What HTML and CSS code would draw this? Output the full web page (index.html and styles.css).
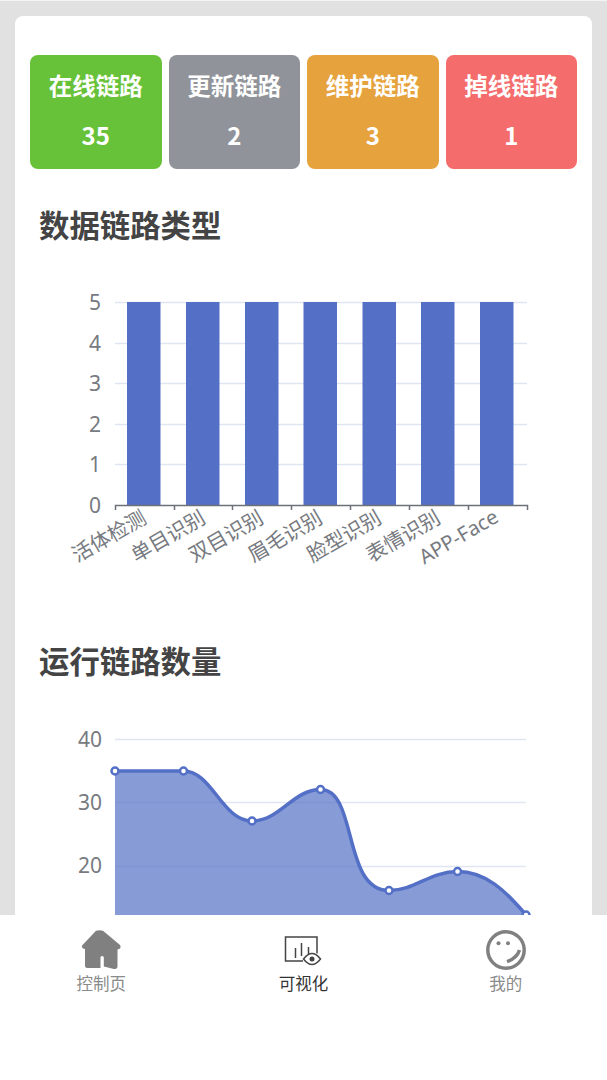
FILE: index.html
```html
<!DOCTYPE html>
<html lang="zh-CN">
<head>
    <meta charset="UTF-8">
    <meta name="viewport" content="width=device-width, initial-scale=1.0">
    <title>可视化</title>
    <link rel="stylesheet" href="styles.css">
</head>
<body>

<div class="page">
    <main class="content">
        <div class="card">
            <div class="stats">
                <div class="stat stat-green"><span class="stat-name">在线链路</span><span class="stat-value">35</span></div>
                <div class="stat stat-gray"><span class="stat-name">更新链路</span><span class="stat-value">2</span></div>
                <div class="stat stat-orange"><span class="stat-name">维护链路</span><span class="stat-value">3</span></div>
                <div class="stat stat-red"><span class="stat-name">掉线链路</span><span class="stat-value">1</span></div>
            </div>

            <h2 class="chart-title title-first">数据链路类型</h2>
            <svg class="chart chart-bar" width="547" height="330" viewBox="30 250 547 330">
                <g class="grid">
                    <line x1="115" x2="527" y1="302.5" y2="302.5"/>
                    <line x1="115" x2="527" y1="343.5" y2="343.5"/>
                    <line x1="115" x2="527" y1="383.5" y2="383.5"/>
                    <line x1="115" x2="527" y1="424.5" y2="424.5"/>
                    <line x1="115" x2="527" y1="464.5" y2="464.5"/>
                </g>
                <g class="bars">
                    <rect x="127" y="302" width="33.5" height="203"/>
                    <rect x="186" y="302" width="33.5" height="203"/>
                    <rect x="245" y="302" width="33.5" height="203"/>
                    <rect x="303.5" y="302" width="33.5" height="203"/>
                    <rect x="362.5" y="302" width="33.5" height="203"/>
                    <rect x="421" y="302" width="33.5" height="203"/>
                    <rect x="480" y="302" width="33.5" height="203"/>
                </g>
                <path class="axis" d="M115.5 510V505.5H527.5V510M174.5 505.5V510M232.5 505.5V510M291.5 505.5V510M350.5 505.5V510M409.5 505.5V510M468.5 505.5V510"/>
                <g class="y-labels">
                    <text x="101" y="310">5</text>
                    <text x="101" y="351">4</text>
                    <text x="101" y="391">3</text>
                    <text x="101" y="432">2</text>
                    <text x="101" y="472">1</text>
                    <text x="101" y="513">0</text>
                </g>
                <g class="x-labels">
                    <text transform="translate(148 522) rotate(-30)">活体检测</text>
                    <text transform="translate(207 522) rotate(-30)">单目识别</text>
                    <text transform="translate(265 522) rotate(-30)">双目识别</text>
                    <text transform="translate(324 522) rotate(-30)">眉毛识别</text>
                    <text transform="translate(383 522) rotate(-30)">脸型识别</text>
                    <text transform="translate(442 522) rotate(-30)">表情识别</text>
                    <text transform="translate(500 521) rotate(-30)">APP-Face</text>
                </g>
            </svg>

            <h2 class="chart-title title-second">运行链路数量</h2>
            <svg class="chart chart-line" width="547" height="240" viewBox="30 700 547 240">
                <g class="grid">
                    <line x1="115" x2="526" y1="739.5" y2="739.5"/>
                    <line x1="115" x2="526" y1="802.5" y2="802.5"/>
                    <line x1="115" x2="526" y1="866.5" y2="866.5"/>
                </g>
                <path class="area" d="M115 771H183.5C212 771 222 821 252 821C280 821 293 789.5 320.5 789.5C358 789.5 342 890.5 389 890.5C415 890.5 430 871.5 457.5 871.5C485 871.5 505 890 526 915V940H115Z"/>
                <path class="line" d="M115 771H183.5C212 771 222 821 252 821C280 821 293 789.5 320.5 789.5C358 789.5 342 890.5 389 890.5C415 890.5 430 871.5 457.5 871.5C485 871.5 505 890 526 915"/>
                <g class="points">
                    <circle cx="115" cy="771" r="3.5"/>
                    <circle cx="183.5" cy="771" r="3.5"/>
                    <circle cx="252" cy="821" r="3.5"/>
                    <circle cx="320.5" cy="789.5" r="3.5"/>
                    <circle cx="389" cy="890.5" r="3.5"/>
                    <circle cx="457.5" cy="871.5" r="3.5"/>
                    <circle cx="526" cy="915" r="3.5"/>
                </g>
                <g class="y-labels">
                    <text x="102" y="747">40</text>
                    <text x="102" y="810">30</text>
                    <text x="102" y="873">20</text>
                </g>
            </svg>
        </div>
    </main>

    <nav class="tabbar">
        <a class="tab" href="#">
            <svg class="tab-icon" width="40" height="40" viewBox="0 0 40 40">
                <path class="icon-home" d="M15 .8Q18.500 -.5 22 .8L39 15Q40.500 18 38 19L36.500 19.500V37Q36 39.500 33 39L22.800 36.500V27Q21 25 19.500 27V38H6.500Q4 38 4 35.500V19L2 18.500Q0 17 1.500 15Z"/>
            </svg>
            <span class="tab-label">控制页</span>
        </a>
        <a class="tab tab-active" href="#">
            <svg class="tab-icon" width="40" height="40" viewBox="0 0 40 40">
                <path class="icon-line" d="M20 31H2.500V7H34V23.500"/>
                <path class="icon-line" d="M12.500 18V28M18.500 13V26M25.500 17V24"/>
                <path class="icon-line" d="M20.500 29Q29 18 37.500 29Q29 40 20.500 29Z"/>
                <circle class="icon-pupil" cx="29" cy="29" r="2.500"/>
            </svg>
            <span class="tab-label">可视化</span>
        </a>
        <a class="tab" href="#">
            <svg class="tab-icon" width="40" height="40" viewBox="0 0 40 40">
                <circle class="icon-face" cx="20" cy="20" r="18.200"/>
                <circle class="icon-eye" cx="12.500" cy="13.300" r="2"/>
                <circle class="icon-eye" cx="22" cy="13.300" r="2"/>
                <path class="icon-smile" d="M21 31.700Q31 28 33.500 20"/>
            </svg>
            <span class="tab-label">我的</span>
        </a>
    </nav>
</div>

</body>
</html>
```

FILE: styles.css
```css
* {
    box-sizing: border-box;
}

body {
    margin: 0;
    font-family: "Noto Sans", "Noto Sans CJK SC", sans-serif;
    background-color: #fff;
}

.page {
    display: flex;
    flex-direction: column;
    height: 1080px;
    overflow: hidden;
}

.content {
    flex: 1;
    min-height: 0;
    overflow: hidden;
    padding: 15px 15px 0;
    border-top: 1px solid #f4f4f4;
    background-color: #e1e1e1;
}

.card {
    height: 1000px;
    padding: 39px 15px 0;
    background-color: #fff;
    border-radius: 8px;
}

.stats {
    display: grid;
    grid-template-columns: repeat(4, 131.5px);
    gap: 7px;
}

.stat {
    display: flex;
    flex-direction: column;
    align-items: center;
    height: 114px;
    padding-top: 12px;
    border-radius: 8px;
    color: #fff;
    font-family: "Noto Sans CJK SC", sans-serif;
    font-weight: 700;
}

.stat-name {
    font-size: 23.5px;
    line-height: 36px;
}

.stat-value {
    margin-top: 14px;
    font-size: 24px;
    line-height: 36px;
}

.stat-green { background-color: #67c23a; }
.stat-gray { background-color: #909399; }
.stat-orange { background-color: #e6a23c; }
.stat-red { background-color: #f56c6c; }

.chart-title {
    margin: 0;
    padding-left: 9px;
    color: #444;
    font-family: "Noto Sans CJK SC", sans-serif;
    font-size: 30.4px;
    font-weight: 700;
    line-height: 44px;
}

.title-first {
    margin-top: 33px;
}

.title-second {
    margin-top: 58px;
}

.chart {
    display: block;
}

.chart-bar {
    margin-top: 4px;
}

.chart-line {
    margin-top: 18px;
}

.grid line {
    stroke: #e0e6f1;
    stroke-width: 1.5;
}

.bars rect {
    fill: #5470c6;
}

.axis {
    fill: none;
    stroke: #6e7079;
    stroke-width: 1.5;
}

.y-labels text {
    fill: #777a80;
    font-size: 21px;
    text-anchor: end;
}

.x-labels text {
    fill: #777a80;
    font-size: 20.4px;
    text-anchor: end;
}

.area {
    fill: #5470c6;
    opacity: 0.7;
}

.line {
    fill: none;
    stroke: #5470c6;
    stroke-width: 3.5;
}

.points circle {
    fill: #fff;
    stroke: #5470c6;
    stroke-width: 2.5;
}

.tabbar {
    display: grid;
    grid-template-columns: repeat(3, 1fr);
    flex: none;
    height: 165px;
    padding-top: 15px;
    background-color: #fff;
}

.tab {
    display: flex;
    flex-direction: column;
    align-items: center;
    color: #8a8a8a;
    text-decoration: none;
}

.tab-active {
    color: #333;
}

.tab-icon {
    display: block;
}

.tab-label {
    font-size: 16.5px;
    line-height: 24px;
    margin-top: 1px;
    font-family: "Noto Sans CJK SC", sans-serif;
}

.icon-home {
    fill: #808080;
}

.icon-line {
    fill: none;
    stroke: #444;
    stroke-width: 1.5;
}

.icon-pupil {
    fill: #444;
}

.icon-face {
    fill: none;
    stroke: #808080;
    stroke-width: 3.5;
}

.icon-eye {
    fill: #808080;
}

.icon-smile {
    fill: none;
    stroke: #808080;
    stroke-width: 3.5;
}
```
